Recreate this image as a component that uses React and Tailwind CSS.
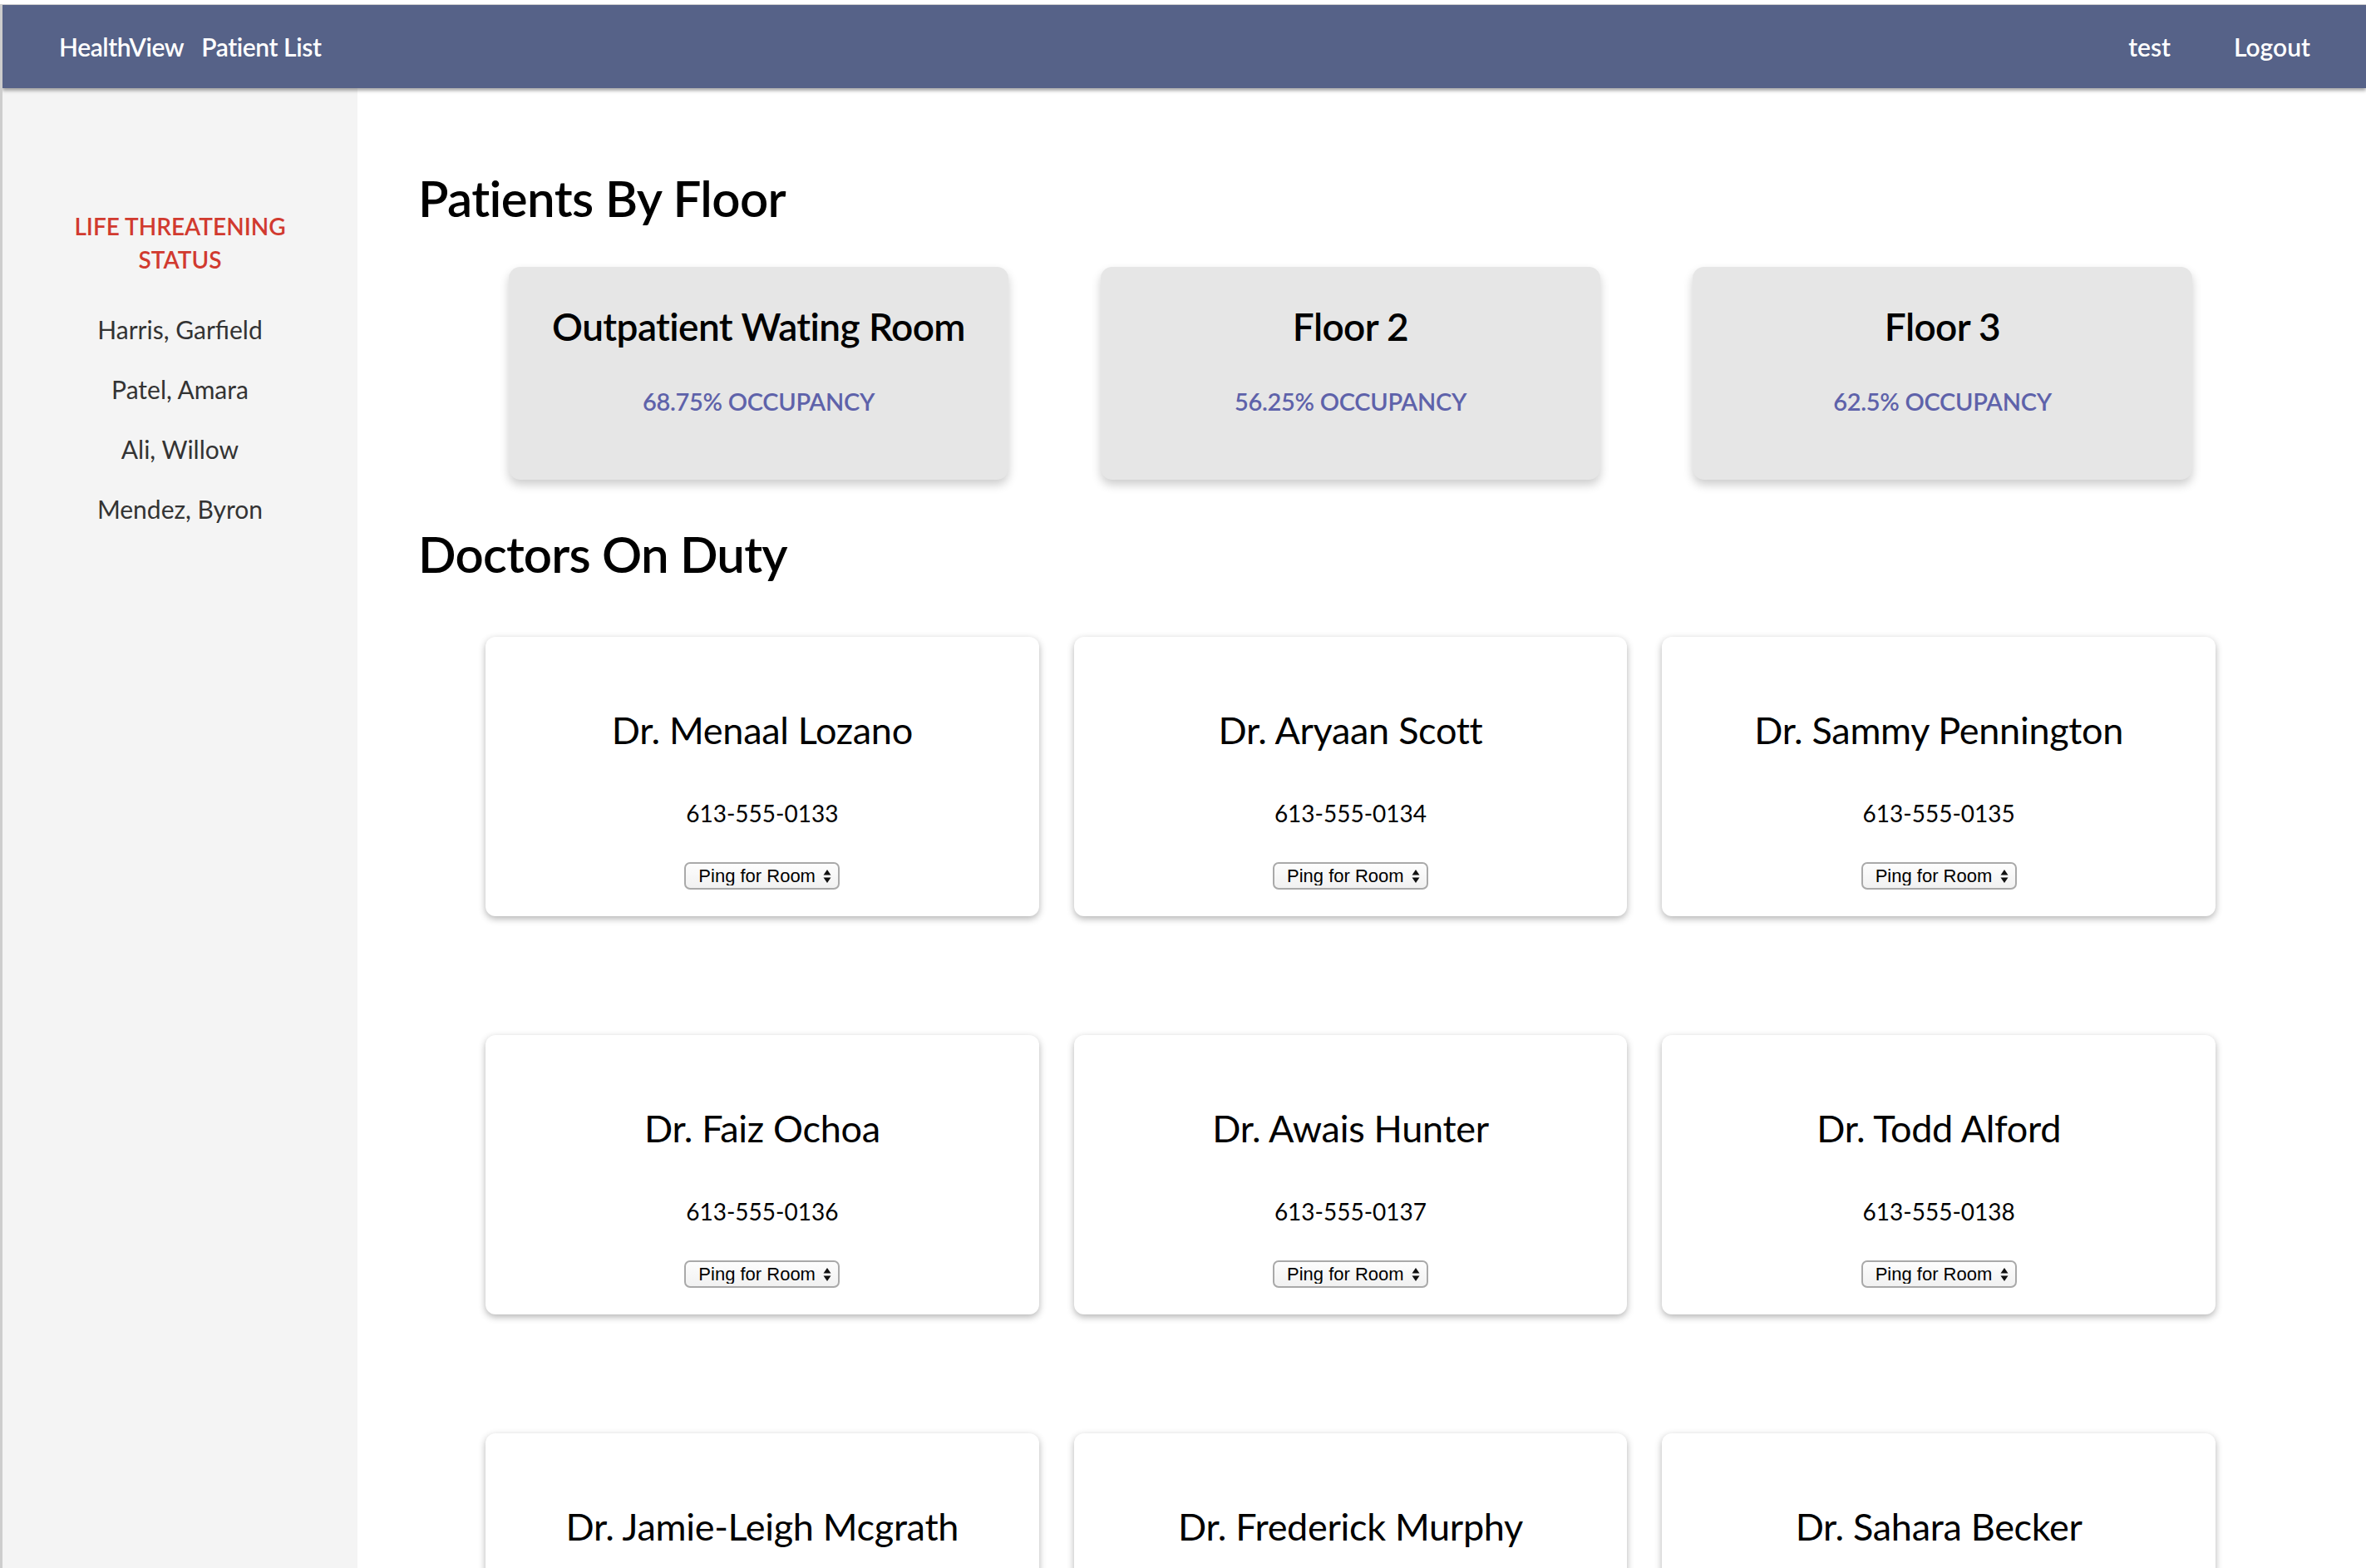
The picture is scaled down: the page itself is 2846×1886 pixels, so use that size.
import { useState } from 'react';

const floors = [
  { name: 'Outpatient Wating Room', occupancy: '68.75%' },
  { name: 'Floor 2', occupancy: '56.25%' },
  { name: 'Floor 3', occupancy: '62.5%' },
];

const doctors = [
  { name: 'Dr. Menaal Lozano', phone: '613-555-0133' },
  { name: 'Dr. Aryaan Scott', phone: '613-555-0134' },
  { name: 'Dr. Sammy Pennington', phone: '613-555-0135' },
  { name: 'Dr. Faiz Ochoa', phone: '613-555-0136' },
  { name: 'Dr. Awais Hunter', phone: '613-555-0137' },
  { name: 'Dr. Todd Alford', phone: '613-555-0138' },
  { name: 'Dr. Jamie-Leigh Mcgrath', phone: '613-555-0139' },
  { name: 'Dr. Frederick Murphy', phone: '613-555-0140' },
  { name: 'Dr. Sahara Becker', phone: '613-555-0141' },
];

const critical = ['Harris, Garfield', 'Patel, Amara', 'Ali, Willow', 'Mendez, Byron'];

function RoomSelect() {
  const [room, setRoom] = useState('');
  return (
    <div className="relative inline-flex">
      <select
        value={room}
        onChange={(e) => setRoom(e.target.value)}
        className="h-[33px] w-[187px] appearance-none rounded-[7px] border-2 border-[#a9a9a9] bg-[linear-gradient(#fdfdfd,#f1f1f1)] pl-[15px] pr-[24px] font-['Liberation_Sans',Arial,sans-serif] text-[22px] leading-none text-black"
      >
        <option value="">Ping for Room</option>
        <option value="101">Room 101</option>
        <option value="102">Room 102</option>
      </select>
      <svg
        viewBox="0 0 10 18"
        className="pointer-events-none absolute right-[10px] top-1/2 h-[18px] w-[10px] -translate-y-1/2"
        fill="#111"
      >
        <path d="M5 1 L9.5 7.5 H0.5 Z" />
        <path d="M5 17 L9.5 10.5 H0.5 Z" />
      </svg>
    </div>
  );
}

function FloorCard({ name, occupancy }) {
  return (
    <div className="flex h-[256px] flex-col items-center rounded-[14px] bg-[#e6e6e6] shadow-[0_6px_12px_rgba(0,0,0,0.2)]">
      <h3 className="mt-[44px] text-[46px] font-semibold leading-[56px] tracking-[-0.6px] text-black">{name}</h3>
      <p className="mt-[43px] text-[29px] font-semibold leading-[38px] tracking-[-0.3px] text-[#5e62aa]">
        {occupancy} OCCUPANCY
      </p>
    </div>
  );
}

function DoctorCard({ name, phone }) {
  return (
    <div className="flex h-[336px] flex-col items-center rounded-[12px] bg-white shadow-[0_3px_9px_rgba(0,0,0,0.3)]">
      <h3 className="mt-[84px] text-[45px] font-normal leading-[56px] tracking-[-0.3px] text-black">{name}</h3>
      <p className="mt-[54px] text-[28px] leading-[36px] text-black">{phone}</p>
      <div className="mt-[41px]">
        <RoomSelect />
      </div>
    </div>
  );
}

export default function App() {
  return (
    <div className="flex h-screen flex-col overflow-hidden bg-white pt-[5px] font-[Lato,'Noto_Sans',sans-serif]">
      <div className="flex flex-1 flex-col overflow-hidden border-l-[3px] border-t border-[#cdcdcd]">
        <nav className="relative z-10 flex h-[100px] shrink-0 items-center justify-between bg-[#566288] pl-[68px] pr-[67px] text-[30px] font-semibold text-white shadow-[0_3px_4px_rgba(0,0,0,0.35)]">
          <div className="flex items-center gap-[21px]">
            <a href="#" className="tracking-[-0.4px]">HealthView</a>
            <a href="#" className="tracking-[-0.4px]">Patient List</a>
          </div>
          <div className="flex items-center gap-[76px]">
            <span>test</span>
            <a href="#">Logout</a>
          </div>
        </nav>

        <div className="flex flex-1 overflow-hidden">
          <aside className="w-[427px] shrink-0 bg-[#f4f4f4] pt-[146px] text-center">
            <h2 className="text-[28px] font-semibold leading-[40px] text-[#d13a2f]">
              LIFE THREATENING
              <br />
              STATUS
            </h2>
            <ul className="mt-[28px]">
              {critical.map((p) => (
                <li key={p} className="py-[16px] text-[30px] leading-[40px] text-[#333]">
                  {p}
                </li>
              ))}
            </ul>
          </aside>

          <main className="flex-1 overflow-y-auto pl-[73px] pr-[101px] pt-[95px]">
            <h1 className="text-[60px] font-semibold leading-[74px] tracking-[-0.6px] text-black">Patients By Floor</h1>
            <div className="ml-[109px] mr-[108px] mt-[46px] grid grid-cols-3 gap-[111px]">
              {floors.map((f) => (
                <FloorCard key={f.name} {...f} />
              ))}
            </div>

            <h1 className="mt-[52px] text-[60px] font-semibold leading-[74px] tracking-[-0.8px] text-black">Doctors On Duty</h1>
            <div className="ml-[81px] mr-[80px] mt-[63px] grid grid-cols-3 gap-x-[42px] gap-y-[143px] pb-20">
              {doctors.map((d) => (
                <DoctorCard key={d.name} {...d} />
              ))}
            </div>
          </main>
        </div>
      </div>
    </div>
  );
}
